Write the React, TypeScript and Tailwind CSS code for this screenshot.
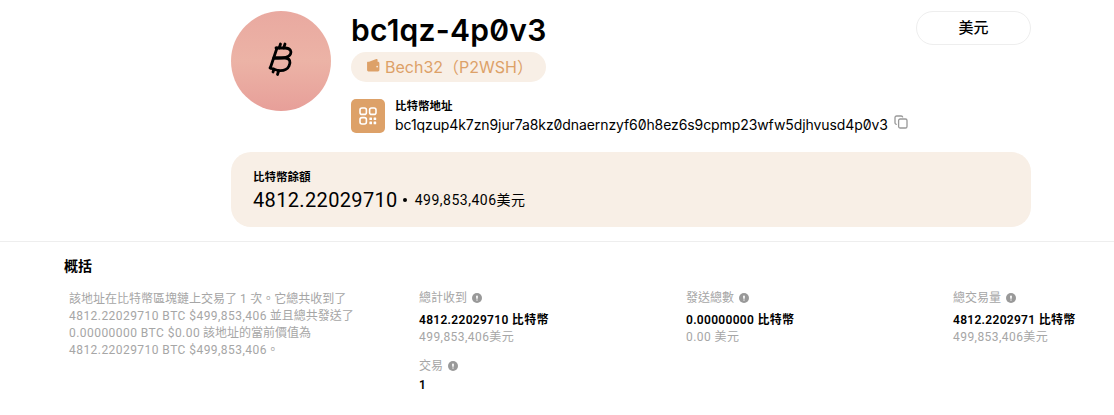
const cjk = "font-['Inter','Noto_Sans_CJK_TC',sans-serif]";

const InfoDot = () => (
  <svg width="10" height="10" viewBox="0 0 10 10" className="ml-[5px] shrink-0">
    <circle cx="5" cy="5" r="5" fill="#999999" />
    <rect x="4.2" y="2.6" width="1.6" height="3.2" rx="0.6" fill="#ffffff" />
    <rect x="4.2" y="6.4" width="1.6" height="1.2" rx="0.5" fill="#ffffff" />
  </svg>
);

const Latin = ({ children }: { children: string }) => (
  <span className="tracking-[0.45px]">{children}</span>
);

const Stat = ({
  label,
  value,
  sub,
}: {
  label: string;
  value: string;
  sub?: string;
}) => (
  <div className="flex flex-col">
    <div className="flex items-center h-[14px] text-[12px] text-[#a6a6a6]">
      {label}
      <InfoDot />
    </div>
    <div
      className={
        sub
          ? "mt-[5px] h-[20px] leading-[20px] text-[12px] font-semibold text-black whitespace-nowrap tracking-[0.3px]"
          : "mt-[2px] h-[20px] leading-[20px] text-[12px] font-semibold text-black whitespace-nowrap tracking-[0.3px]"
      }
    >
      {value}
    </div>
    {sub && (
      <div className="h-[14px] leading-[14px] text-[12px] text-[#a6a6a6] whitespace-nowrap tracking-[0.45px]">
        {sub}
      </div>
    )}
  </div>
);

export default function App() {
  return (
    <div className={`w-[1114px] h-[415px] overflow-hidden bg-white ${cjk}`}>
      <div className="w-[800px] ml-[231px] pt-[11px]">
        <div className="flex items-start">
          <div className="w-[100px] h-[100px] rounded-full bg-gradient-to-b from-[#e9a9a0] via-[#ecb3a6] to-[#e79f99] flex items-center justify-center">
            <svg width="40" height="46" viewBox="0 0 40 46" fill="none" stroke="#000000" strokeWidth="2.8" strokeLinecap="round" strokeLinejoin="round">
              <path d="M16 10 9.3 30" />
              <path d="M15 10H24C30 10 30.5 14 29.5 16 28 19.5 24 20 13 20" />
              <path d="M13 20H24C29 20 30 24 28 28 26.5 31.5 22 33 17 32.5L9 30" />
              <path d="M19.5 6 18.2 10M24 6 22.7 10M12 34 13 31M16.5 36.5 17.6 33" />
            </svg>
          </div>
          <div className="ml-[20px] flex-1 flex flex-col items-start">
            <div className="flex justify-between w-full">
              <h1 className="text-[30px] leading-[38px] font-semibold text-black slashed-zero tracking-[0.25px]">
                bc1qz-4p0v3
              </h1>
              <button className="w-[115px] h-[34px] rounded-full border border-[#eeeeee] text-[15px] font-medium text-black">
                美元
              </button>
            </div>
            <div className="mt-[3px] h-[30px] w-[195px] rounded-full bg-[#f8efe6] flex items-center pl-[15px] text-[16px] text-[#dda168] whitespace-nowrap">
              <svg width="15" height="15" viewBox="0 0 14 14" className="mr-[4px] -mt-[4px]">
                <path
                  d="M1 4.2 9.6.9c.6-.2 1.2.2 1.2.8V3.5H3ZM1.4 3.5h9.8c.7 0 1.3.6 1.3 1.3v6.4c0 .7-.6 1.3-1.3 1.3H2.3c-.7 0-1.3-.6-1.3-1.3V4Z"
                  fill="#dda168"
                />
                <circle cx="10.4" cy="8" r="0.8" fill="#f8efe6" />
              </svg>
              Bech32（P2WSH）
            </div>
            <div className="mt-[14px] flex items-center">
              <div className="w-[34px] h-[34px] rounded-[5px] bg-[#dda168] flex items-center justify-center">
                <svg width="18" height="18" viewBox="0 0 18 18" fill="none" stroke="#ffffff" strokeWidth="1.6">
                  <rect x="1" y="1" width="6.4" height="6.4" rx="2" />
                  <rect x="10.6" y="1" width="6.4" height="6.4" rx="2" />
                  <rect x="1" y="10.6" width="6.4" height="6.4" rx="2" />
                  <g fill="#ffffff" stroke="none">
                    <rect x="10.4" y="10.4" width="2.6" height="2.6" rx="0.5" />
                    <rect x="14.6" y="10.4" width="2.6" height="2.6" rx="0.5" />
                    <rect x="10.4" y="14.6" width="2.6" height="2.6" rx="0.5" />
                    <rect x="14.6" y="14.6" width="2.6" height="2.6" rx="0.5" />
                  </g>
                </svg>
              </div>
              <div className="ml-[10px] flex flex-col pt-[2px]">
                <div className="text-[11.5px] leading-[16px] font-semibold text-black">比特幣地址</div>
                <div className="mt-[1px] flex items-center text-[14px] leading-[20px] text-black slashed-zero whitespace-nowrap tracking-[-0.09px]">
                  bc1qzup4k7zn9jur7a8kz0dnaernzyf60h8ez6s9cpmp23wfw5djhvusd4p0v3
                  <svg width="14" height="14" viewBox="0 0 14 14" fill="none" stroke="#999999" strokeWidth="1.3" className="ml-[6px] -mt-[6px]">
                    <rect x="4.6" y="4" width="8.4" height="9" rx="1.6" />
                    <path d="M2.8 9.4A1.6 1.6 0 0 1 1 8V2.6C1 1.7 1.7 1 2.6 1h4.6c.8 0 1.4.5 1.6 1.3" />
                  </svg>
                </div>
              </div>
            </div>
          </div>
        </div>
        <div className="mt-[17px] h-[75px] rounded-[20px] bg-[#f8efe6] pl-[22px] pt-[17px]">
          <div className="text-[11.5px] leading-[16px] font-semibold text-black">比特幣餘額</div>
          <div className="flex items-center mt-[2px] font-['Roboto','Noto_Sans_CJK_TC',sans-serif]">
            <span className="text-[20px] leading-[26px] tracking-[0.35px] text-black">4812.22029710</span>
            <span className="ml-[5px] mr-[8px] w-[4px] h-[4px] rounded-full bg-black" />
            <span className="text-[14px] tracking-[0.5px] text-black">499,853,406美元</span>
          </div>
        </div>
      </div>

      <div className="mt-[14px] border-t border-[#eeeeee] pl-[64px] pt-[15px] font-['Roboto','Noto_Sans_CJK_TC',sans-serif]">
        <h2 className="text-[14px] leading-[18px] font-bold text-black">概括</h2>
        <div className="flex mt-[16px]">
          <p className="ml-[5px] w-[290px] shrink-0 text-[12px] leading-[17px] text-[#a6a6a6]">
            該地址在比特幣區塊鏈上交易了 <Latin>1</Latin> 次。它總共收到了 <Latin>4812.22029710 BTC $499,853,406</Latin> 並且總共發送了 <Latin>0.00000000 BTC $0.00</Latin> 該地址的當前價值為 <Latin>4812.22029710 BTC $499,853,406</Latin>。
          </p>
          <div className="ml-[60px] grid grid-cols-[267px_267px_267px] gap-y-[15px] items-start h-fit">
            <Stat label="總計收到" value="4812.22029710 比特幣" sub="499,853,406美元" />
            <Stat label="發送總數" value="0.00000000 比特幣" sub="0.00 美元" />
            <Stat label="總交易量" value="4812.2202971 比特幣" sub="499,853,406美元" />
            <Stat label="交易" value="1" />
          </div>
        </div>
      </div>
    </div>
  );
}
